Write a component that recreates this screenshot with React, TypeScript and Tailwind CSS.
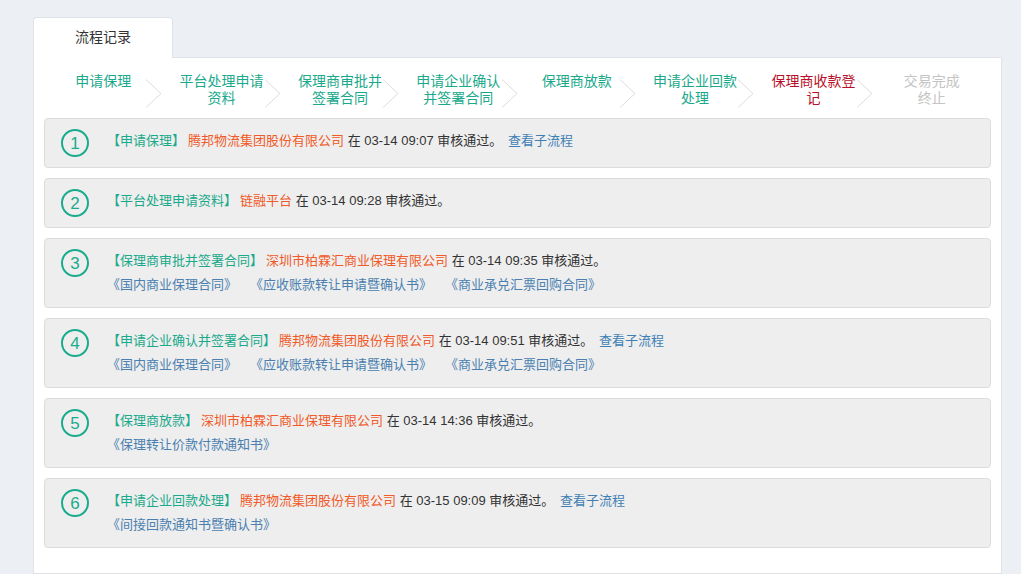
const steps = [
  { text: ['申请保理'], state: 'done' },
  { text: ['平台处理申请', '资料'], state: 'done' },
  { text: ['保理商审批并', '签署合同'], state: 'done' },
  { text: ['申请企业确认', '并签署合同'], state: 'done' },
  { text: ['保理商放款'], state: 'done' },
  { text: ['申请企业回款', '处理'], state: 'done' },
  { text: ['保理商收款登', '记'], state: 'current' },
  { text: ['交易完成', '终止'], state: 'todo' },
];

const records = [
  { no: 1, step: '申请保理', org: '腾邦物流集团股份有限公司', time: '03-14 09:07', sub: true, docs: [] as string[] },
  { no: 2, step: '平台处理申请资料', org: '链融平台', time: '03-14 09:28', sub: false, docs: [] },
  {
    no: 3,
    step: '保理商审批并签署合同',
    org: '深圳市柏霖汇商业保理有限公司',
    time: '03-14 09:35',
    sub: false,
    docs: ['《国内商业保理合同》', '《应收账款转让申请暨确认书》', '《商业承兑汇票回购合同》'],
  },
  {
    no: 4,
    step: '申请企业确认并签署合同',
    org: '腾邦物流集团股份有限公司',
    time: '03-14 09:51',
    sub: true,
    docs: ['《国内商业保理合同》', '《应收账款转让申请暨确认书》', '《商业承兑汇票回购合同》'],
  },
  { no: 5, step: '保理商放款', org: '深圳市柏霖汇商业保理有限公司', time: '03-14 14:36', sub: false, docs: ['《保理转让价款付款通知书》'] },
  { no: 6, step: '申请企业回款处理', org: '腾邦物流集团股份有限公司', time: '03-15 09:09', sub: true, docs: ['《间接回款通知书暨确认书》'] },
];

const stepColor = {
  done: 'text-[#1aa98b]',
  current: 'text-[#b8102a]',
  todo: 'text-[#c4c4c4]',
};

function Chevron() {
  return (
    <svg className="absolute right-0 top-[6px]" width="17" height="29" viewBox="0 0 17 29">
      <polyline points="1,0.5 16,14.5 1,28.5" fill="none" stroke="#dcdcdc" strokeWidth="1" />
    </svg>
  );
}

export default function App() {
  return (
    <div
      className="min-h-[574px] bg-[#eceff3] pl-[33px] pr-[19px] pt-[17px] text-[13px] text-[#333]"
      style={{ fontFamily: '"Liberation Sans", "Noto Sans CJK SC", sans-serif' }}
    >
      {/* Tab */}
      <div className="relative z-10 -mb-px flex h-[41px] w-[140px] items-center justify-center rounded-t-[4px] border border-b-0 border-[#dfe3e8] bg-white pb-[1px] text-[14px]">
        流程记录
      </div>

      {/* Panel */}
      <div className="min-h-[517px] border border-[#dfe3e8] bg-white px-[10px]">
        {/* Steps */}
        <div className="flex pt-[15px] pb-[5px]">
          {steps.map((s, i) => (
            <div key={i} className={`relative h-[40px] flex-1 text-center text-[14px] leading-[17px] ${stepColor[s.state as keyof typeof stepColor]}`}>
              {s.text.map((t) => (
                <div key={t}>{t}</div>
              ))}
              {i < steps.length - 1 && <Chevron />}
            </div>
          ))}
        </div>

        {/* Records */}
        <div className="flex flex-col gap-[10px] pb-[20px]">
          {records.map((r) => (
            <div key={r.no} className="flex items-start rounded-[4px] border border-[#dcdcdc] bg-[#eeeeee] py-[10px] pl-[16px]">
              <div className="flex h-[28px] w-[28px] shrink-0 items-center justify-center rounded-full border-2 border-[#1aab8c] text-[17px] font-light leading-none text-[#1aab8c]">
                {r.no}
              </div>
              <div className="ml-[18px] leading-[24px]">
                <div className="whitespace-nowrap">
                  <span className="text-[#1aa98b]">【{r.step}】</span>
                  <span className="ml-[3px] text-[#f05a28]">{r.org}</span>
                  <span> 在 {r.time} 审核通过。 </span>
                  {r.sub && <span className="ml-[2px] text-[#3f7fb3]">查看子流程</span>}
                </div>
                {r.docs.length > 0 && (
                  <div className="flex gap-[13px] text-[#4a7fb0]">
                    {r.docs.map((d) => (
                      <span key={d}>{d}</span>
                    ))}
                  </div>
                )}
              </div>
            </div>
          ))}
        </div>
      </div>
    </div>
  );
}
